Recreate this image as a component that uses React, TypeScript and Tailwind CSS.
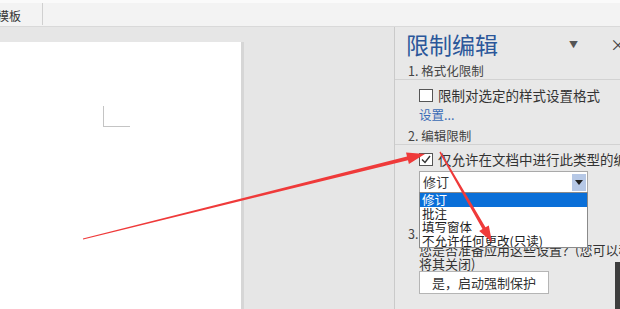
import React from "react";

const cjk = { fontFamily: '"Microsoft YaHei", "Noto Sans CJK SC", "Noto Sans", sans-serif' };

function CheckBox({ checked }: { checked?: boolean }) {
  return (
    <span className="w-[14px] h-[13px] border border-[#555] bg-white flex items-center justify-center shrink-0">
      {checked && (
        <svg width="10" height="9" viewBox="0 0 10 9">
          <path d="M1 4.5 L4 7.5 L9 1" fill="none" stroke="#333" strokeWidth="1.4" />
        </svg>
      )}
    </span>
  );
}

function SectionTitle({ text }: { text: string }) {
  return (
    <div className="h-[17px] leading-[16px] text-[12.5px] text-[#444] border-b border-[#d2d2d2] pl-[13px] mr-[-20px]">
      {text}
    </div>
  );
}

export default function App() {
  const options = ["修订", "批注", "填写窗体", "不允许任何更改(只读)"];

  return (
    <div className="relative w-[620px] h-[309px] overflow-hidden bg-[#e6e6e6] flex flex-col" style={cjk}>
      {/* Ribbon strip */}
      <div className="h-[27px] shrink-0 bg-[#f3f3f3] border-t-[3px] border-t-[#fafafa] border-b border-b-[#d9d9d9] flex">
        <div className="w-[43px] border-r border-[#d0d0d0] h-[22px] overflow-hidden">
          <span className="block ml-[-3px] mt-[6px] text-[12px] leading-[14px] text-[#333] whitespace-nowrap">模板</span>
        </div>
      </div>

      <div className="flex flex-1 min-h-0">
        {/* Document area */}
        <div className="w-[394px] shrink-0 pt-[15px] bg-[#e6e6e6]">
          <div className="w-[244px] h-full bg-white border-r-[3px] border-[#d6d6d6] pl-[103px] pt-[64px]">
            <div className="w-[27px] h-[21px] border-l border-b border-[#c4c4c4]" />
          </div>
        </div>

        {/* Restrict editing pane */}
        <div className="relative w-[250px] shrink-0 bg-[#e8e8e8] border-l border-[#cacaca] overflow-hidden">
          <div className="flex items-center h-[32px] pl-[11px] pt-[2px]">
            <span className="text-[23px] leading-[28px] text-[#2b579a]">限制编辑</span>
            <span className="ml-[71px] mt-[2px] text-[9px] text-[#555]">▼</span>
            <span className="ml-[32px] text-[16px] text-[#444]">×</span>
          </div>

          <div className="mt-[4px]">
            <SectionTitle text="1. 格式化限制" />
          </div>
          <div className="flex items-center gap-[5px] pl-[24px] mt-[7px] h-[16px]">
            <CheckBox />
            <span className="text-[13.5px] leading-[16px] text-[#333] whitespace-nowrap">限制对选定的样式设置格式</span>
          </div>
          <div className="pl-[24px] mt-[4px] h-[16px] text-[12.5px] leading-[16px] text-[#3a6bb5]">设置...</div>

          <div className="mt-[5px]">
            <SectionTitle text="2. 编辑限制" />
          </div>
          <div className="flex items-center gap-[5px] pl-[24px] mt-[6px] h-[16px]">
            <CheckBox checked />
            <span className="text-[13.5px] leading-[16px] text-[#333] whitespace-nowrap">仅允许在文档中进行此类型的编辑:</span>
          </div>

          <div className="relative ml-[24px] mt-[4px] w-[169px]">
            <div className="h-[22px] bg-white border border-[#a9a9a9] flex items-center">
              <span className="pl-[3px] flex-1 text-[13px] text-[#333]">修订</span>
              <span className="w-[14px] h-[17px] mr-[1px] bg-[#b6c8e6] flex items-center justify-center">
                <svg width="8" height="5" viewBox="0 0 8 5">
                  <path d="M0 0 H8 L4 5 Z" fill="#222" />
                </svg>
              </span>
            </div>
            <div className="absolute left-0 top-[21px] z-10 w-[169px] bg-white border border-[#8a8a8a] flex flex-col">
              {options.map((o, i) => (
                <div
                  key={o}
                  className={
                    i === 0
                      ? "h-[13.5px] shrink-0 overflow-hidden leading-[13.5px] pl-[2px] text-[12.5px] bg-[#0a6fd8] text-white whitespace-nowrap"
                      : "h-[13.5px] shrink-0 overflow-hidden leading-[13.5px] pl-[2px] text-[12.5px] text-[#222] whitespace-nowrap"
                  }
                >
                  {o}
                </div>
              ))}
            </div>
          </div>

          <div className="mt-[33px] h-[16px] pl-[13px] text-[12.5px] leading-[16px] text-[#444] whitespace-nowrap">3. 启动强制保护</div>
          <div className="pl-[24px] mt-[1px] text-[13px] leading-[13.5px] text-[#333] whitespace-nowrap">
            <div>您是否准备应用这些设置？(您可以稍后</div>
            <div>将其关闭)</div>
          </div>
          <div className="ml-[24px] mt-[1px] w-[130px] h-[23px] bg-white border border-[#b5b5b5] flex items-center justify-center text-[13px] text-[#333]">
            是，启动强制保护
          </div>

          <div className="absolute left-[220px] top-[235px] w-[10px] h-[60px] bg-[#3d3d3d]" />
        </div>
      </div>

      {/* Red annotation arrows */}
      <svg className="absolute left-0 top-0 pointer-events-none z-20" width="620" height="309" viewBox="0 0 620 309">
        <polygon
          points="82.9,238.5 407,156.4 406,152.5 425,154 408.9,164.1 408,160.2 83.1,239.5"
          fill="#ef3a3a"
        />
        <polygon
          points="440.6,151.6 485.5,227.3 488.8,225.5 492,242 479.2,230.9 482.5,229.1 439.4,152.4"
          fill="#ef3a3a"
        />
      </svg>
    </div>
  );
}
